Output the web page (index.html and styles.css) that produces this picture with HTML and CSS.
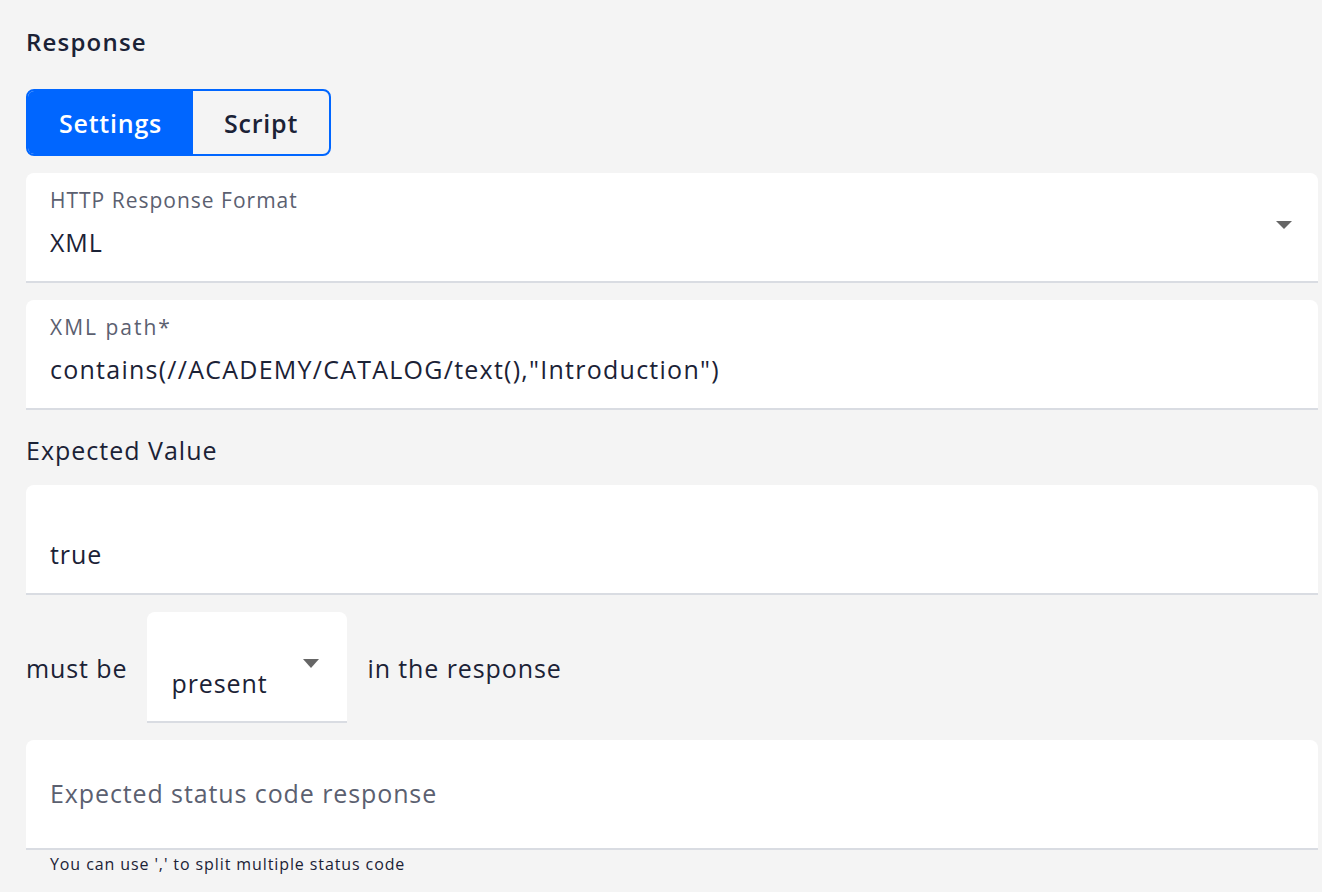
FILE: index.html
```html
<!DOCTYPE html>
<html>
<head>
<meta charset="utf-8">
<link rel="stylesheet" href="styles.css">
</head>
<body>
<div class="page">
  <h2 class="title">Response</h2>
  <div class="toggle">
    <button class="tab active">Settings</button>
    <button class="tab">Script</button>
  </div>
  <div class="field select-field">
    <div class="label">HTTP Response Format</div>
    <div class="value">XML</div>
    <span class="caret big"></span>
  </div>
  <div class="field">
    <div class="label path-label">XML path*</div>
    <div class="value code">contains(//ACADEMY/CATALOG/text(),"Introduction")</div>
  </div>
  <div class="section-label">Expected Value</div>
  <div class="field plain">
    <div class="value">true</div>
  </div>
  <div class="must-row">
    <span class="inline-text">must be</span>
    <div class="mini-select">
      <span class="mini-value">present</span>
      <span class="caret small"></span>
    </div>
    <span class="inline-text">in the response</span>
  </div>
  <div class="field plain status">
    <div class="value placeholder">Expected status code response</div>
  </div>
  <div class="helper">You can use ',' to split multiple status code</div>
</div>
</body>
</html>
```

FILE: styles.css
```css
html, body {
  margin: 0;
  padding: 0;
  background: #f4f4f4;
}
body {
  font-family: "Open Sans", "Noto Sans", sans-serif;
  color: #1b2236;
}
.page {
  padding: 27px 4px 0 26px;
  display: flex;
  flex-direction: column;
}
.title {
  margin: 0;
  font-size: 24px;
  font-weight: 600;
  letter-spacing: 1.2px;
  line-height: 30px;
}
.toggle {
  margin-top: 32px;
  display: flex;
  width: 305px;
  height: 67px;
  box-sizing: border-box;
  border: 2px solid #0066ff;
  border-radius: 8px;
  overflow: hidden;
}
.tab {
  border: 0;
  margin: 0;
  padding: 0;
  background: transparent;
  font-family: inherit;
  font-size: 25px;
  font-weight: 600;
  letter-spacing: 0.8px;
  color: #1b2236;
  cursor: pointer;
}
.tab.active {
  width: 165px;
  background: #0066ff;
  color: #fff;
}
.tab:not(.active) {
  flex: 1;
}
.field {
  position: relative;
  margin-top: 17px;
  height: 110px;
  box-sizing: border-box;
  background: #fff;
  border-radius: 8px 8px 0 0;
  border-bottom: 2px solid #d9dce2;
  padding: 13px 24px 0 24px;
}
.label {
  font-size: 21px;
  letter-spacing: 1px;
  color: #5b6070;
  line-height: 28px;
}
.path-label {
  letter-spacing: 2px;
}
.value {
  font-size: 25px;
  letter-spacing: 0.9px;
  line-height: 32px;
  margin-top: 12px;
}
.value.code {
  letter-spacing: 1.25px;
}
.field.plain {
  padding-top: 53px;
}
.field.plain .value {
  margin-top: 0;
}
.placeholder {
  color: #5b6070;
}
.caret {
  position: absolute;
  width: 0;
  height: 0;
  border-left: 8px solid transparent;
  border-right: 8px solid transparent;
  border-top: 8px solid #666;
}
.caret.big {
  right: 26px;
  top: 48px;
}
.section-label {
  margin-top: 24px;
  font-size: 25px;
  letter-spacing: 1px;
  line-height: 32px;
}
.field.plain {
  margin-top: 19px;
}
.must-row {
  margin-top: 17px;
  display: flex;
  align-items: center;
  gap: 20px;
}
.inline-text {
  font-size: 25px;
  letter-spacing: 0.9px;
  line-height: 32px;
}
.mini-select {
  position: relative;
  width: 200px;
  height: 111px;
  box-sizing: border-box;
  background: #fff;
  border-radius: 8px 8px 0 0;
  border-bottom: 2px solid #d9dce2;
  padding: 55px 24px 0 24px;
}
.mini-value {
  font-size: 25px;
  letter-spacing: 0.9px;
  line-height: 32px;
}
.caret.small {
  right: 28px;
  top: 47px;
  border-top-width: 9px;
}
.field.status {
  margin-top: 17px;
  padding-top: 37px;
}
.helper {
  padding: 2px 0 0 24px;
  font-size: 16px;
  letter-spacing: 0.9px;
  line-height: 24px;
}
```
